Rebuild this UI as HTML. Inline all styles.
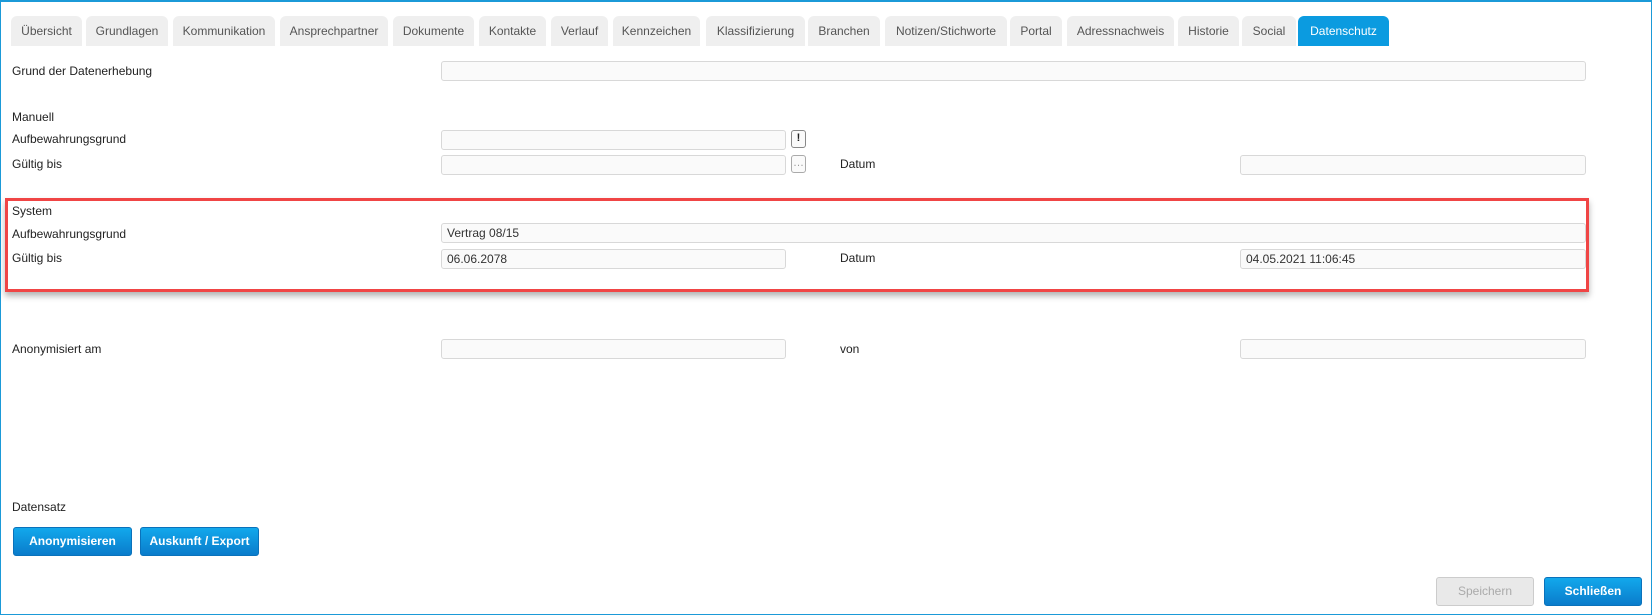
<!DOCTYPE html>
<html><head><meta charset="utf-8"><style>
*{box-sizing:border-box;margin:0;padding:0}
body{width:1652px;height:615px;background:#fff;font-family:"Liberation Sans",Arial,sans-serif;font-size:12px;color:#222;position:relative;overflow:hidden}
.frame{position:absolute;left:0;top:0;width:1652px;height:615px;border:1px solid #1b9ad8;border-top-width:2px}
.tab{position:absolute;top:16px;height:30px;background:#efefef;border-radius:6px 6px 0 0;color:#555;text-align:center;line-height:30px;font-size:12px}
.tab.act{background:#0b9be0;color:#fff}
.l{position:absolute;left:12px;font-size:12px}
.in{position:absolute;height:20px;background:#fafafa;border:1px solid #d8d8d8;border-radius:3px;font-size:12px;line-height:18px;padding-left:5px;color:#333}
.sb{position:absolute;width:15px;height:18px;border:1px solid #888;border-radius:3px;background:#fafafa;text-align:center;font-size:11px;line-height:15px;font-weight:bold}
.btn{position:absolute;height:29px;border-radius:3px;background:linear-gradient(#12a8ec,#0a7ccb);border:1px solid #0a72bb;color:#fff;font-weight:bold;font-size:12px;text-align:center;line-height:27px}
.red{position:absolute;left:5px;top:198px;width:1584px;height:94px;border:3px solid #f04545;box-shadow:0 4px 6px rgba(0,0,0,.3)}
</style></head><body>
<div class="frame"></div>
<div class="tab" style="left:11px;width:71px">Übersicht</div>
<div class="tab" style="left:86px;width:82px">Grundlagen</div>
<div class="tab" style="left:173px;width:102px">Kommunikation</div>
<div class="tab" style="left:280px;width:108px">Ansprechpartner</div>
<div class="tab" style="left:393px;width:81px">Dokumente</div>
<div class="tab" style="left:479px;width:67px">Kontakte</div>
<div class="tab" style="left:551px;width:57px">Verlauf</div>
<div class="tab" style="left:613px;width:87px">Kennzeichen</div>
<div class="tab" style="left:706px;width:99px">Klassifizierung</div>
<div class="tab" style="left:808px;width:72px">Branchen</div>
<div class="tab" style="left:885px;width:122px">Notizen/Stichworte</div>
<div class="tab" style="left:1010px;width:52px">Portal</div>
<div class="tab" style="left:1067px;width:107px">Adressnachweis</div>
<div class="tab" style="left:1178px;width:61px">Historie</div>
<div class="tab" style="left:1242px;width:54px">Social</div>
<div class="tab act" style="left:1298px;width:91px">Datenschutz</div>

<div class="l" style="top:64px">Grund der Datenerhebung</div>
<div class="in" style="left:441px;top:61px;width:1145px"></div>

<div class="l" style="top:110px">Manuell</div>
<div class="l" style="top:132px">Aufbewahrungsgrund</div>
<div class="in" style="left:441px;top:130px;width:345px"></div>
<div class="sb" style="left:791px;top:130px">!</div>
<div class="l" style="top:157px">Gültig bis</div>
<div class="in" style="left:441px;top:155px;width:345px"></div>
<div class="sb" style="left:791px;top:155px;border-color:#aaa;color:#999;font-weight:normal">…</div>
<div class="l" style="left:840px;top:157px">Datum</div>
<div class="in" style="left:1240px;top:155px;width:346px"></div>

<div class="red"></div>
<div class="l" style="top:204px">System</div>
<div class="l" style="top:227px">Aufbewahrungsgrund</div>
<div class="in" style="left:441px;top:223px;width:1145px">Vertrag 08/15</div>
<div class="l" style="top:251px">Gültig bis</div>
<div class="in" style="left:441px;top:249px;width:345px">06.06.2078</div>
<div class="l" style="left:840px;top:251px">Datum</div>
<div class="in" style="left:1240px;top:249px;width:346px">04.05.2021 11:06:45</div>

<div class="l" style="top:342px">Anonymisiert am</div>
<div class="in" style="left:441px;top:339px;width:345px"></div>
<div class="l" style="left:840px;top:342px">von</div>
<div class="in" style="left:1240px;top:339px;width:346px"></div>

<div class="l" style="top:500px">Datensatz</div>
<div class="btn" style="left:13px;top:527px;width:119px">Anonymisieren</div>
<div class="btn" style="left:140px;top:527px;width:119px">Auskunft / Export</div>

<div class="btn" style="left:1436px;top:577px;width:98px;background:#e9e9e9;border-color:#ccc;color:#aaa;font-weight:normal">Speichern</div>
<div class="btn" style="left:1544px;top:577px;width:98px">Schließen</div>
</body></html>
